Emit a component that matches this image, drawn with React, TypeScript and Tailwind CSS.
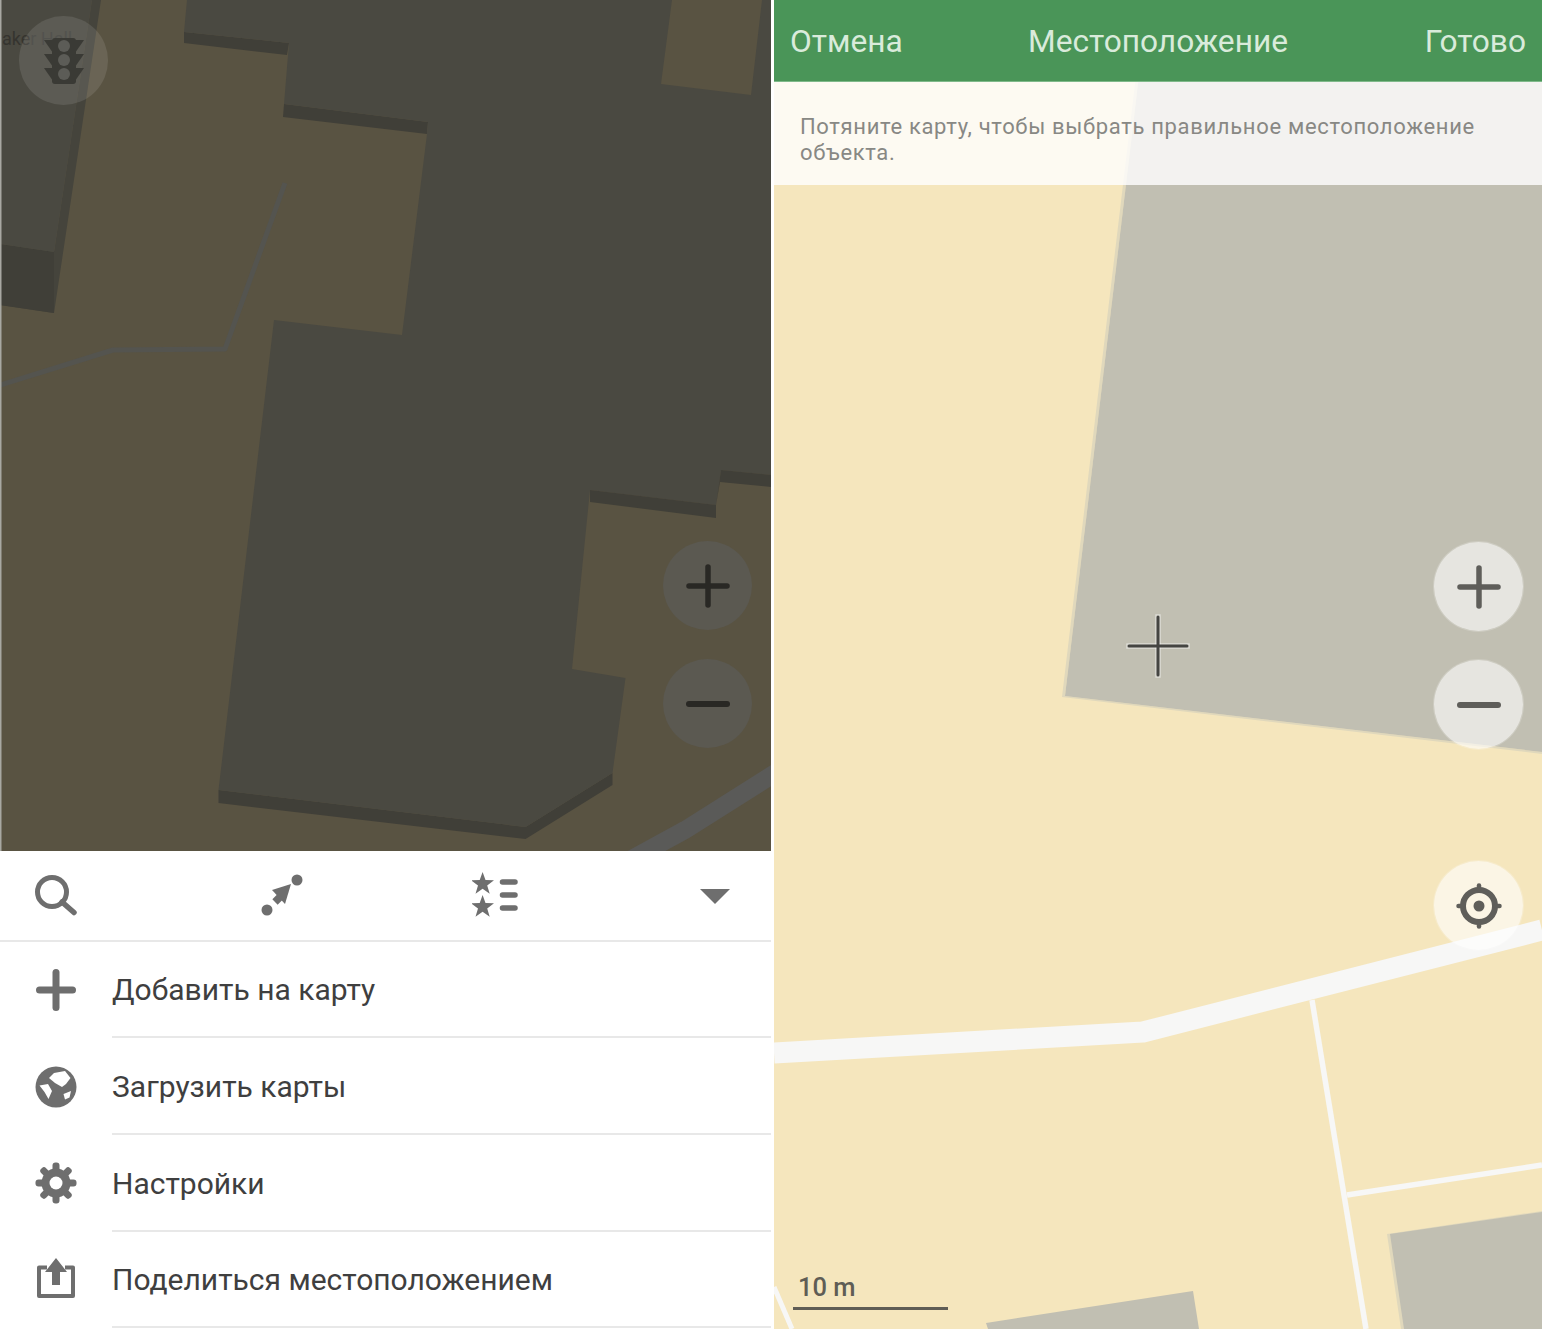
import React from "react";

const STAR = "0,-12 2.9,-3.9 11.4,-3.7 4.6,1.5 7.1,9.7 0,4.8 -7.1,9.7 -4.6,1.5 -11.4,-3.7 -2.9,-3.9";
const G = "#6e6e6e";

function Ico({ children }: { children: React.ReactNode }) {
  return (
    <svg width="48" height="48" viewBox="0 0 48 48" className="block shrink-0">
      {children}
    </svg>
  );
}

const SearchIcon = () => (
  <Ico>
    <circle cx="20" cy="20" r="14.5" fill="none" stroke={G} strokeWidth="5" />
    <line x1="30" y1="30" x2="42" y2="40.5" stroke={G} strokeWidth="5.5" strokeLinecap="round" />
  </Ico>
);
const RouteIcon = () => (
  <Ico>
    <circle cx="9" cy="38" r="5.5" fill={G} />
    <circle cx="39" cy="8" r="5.5" fill={G} />
    <polygon points="33,12 14,18 27,32" fill={G} />
    <line x1="23" y1="24" x2="17" y2="30" stroke={G} strokeWidth="7.5" />
  </Ico>
);
const ListIcon = () => (
  <Ico>
    <polygon points={STAR} fill={G} transform="translate(10.6 12)" />
    <polygon points={STAR} fill={G} transform="translate(10.6 35)" />
    <g stroke={G} strokeWidth="5.5" strokeLinecap="round">
      <line x1="30.5" y1="10" x2="43" y2="10" />
      <line x1="30.5" y1="23" x2="43" y2="23" />
      <line x1="30.5" y1="36" x2="43" y2="36" />
    </g>
  </Ico>
);
const TriangleIcon = () => (
  <Ico>
    <polygon points="9,17 39,17 24,32" fill={G} />
  </Ico>
);
const PlusIcon = () => (
  <Ico>
    <g stroke={G} strokeWidth="7" strokeLinecap="round">
      <line x1="7.5" y1="24" x2="40.5" y2="24" />
      <line x1="24" y1="6.5" x2="24" y2="41.5" />
    </g>
  </Ico>
);
const GlobeIcon = () => (
  <Ico>
    <circle cx="24" cy="24" r="20.5" fill={G} />
    <polygon points="17,15 22,10 33,8 38.5,15 34,21 30,24 23,20" fill="#fff" />
    <polygon points="7.5,22.5 16,21 20,28 16.5,36 12.5,29" fill="#fff" />
    <polygon points="31.5,31 39,28 37.5,34.5 33,36.5" fill="#fff" />
  </Ico>
);
const GearIcon = () => (
  <Ico>
    {[0, 45, 90, 135, 180, 225, 270, 315].map((a) => (
      <rect key={a} x="20.5" y="3.5" width="7" height="12" rx="3" fill={G} transform={`rotate(${a} 24 24)`} />
    ))}
    <circle cx="24" cy="24" r="14.5" fill={G} />
    <circle cx="24" cy="24" r="6.5" fill="#fff" />
  </Ico>
);
const ShareIcon = () => (
  <Ico>
    <path d="M15 11.5H7V40H41V11.5H33" fill="none" stroke={G} strokeWidth="4" strokeLinejoin="round" />
    <polygon points="24,2 35,16 28,16 28,29 20,29 20,16 13,16" fill={G} />
  </Ico>
);

function MapButton({ className, children }: { className: string; children: React.ReactNode }) {
  return (
    <div className={`absolute w-[89px] h-[89px] rounded-full flex items-center justify-center ${className}`}>
      {children}
    </div>
  );
}

const PlusGlyph = ({ c }: { c: string }) => (
  <svg width="44" height="44" viewBox="0 0 44 44">
    <g stroke={c} strokeWidth="5.5" strokeLinecap="round">
      <line x1="3" y1="22" x2="41" y2="22" />
      <line x1="22" y1="3" x2="22" y2="41" />
    </g>
  </svg>
);
const MinusGlyph = ({ c }: { c: string }) => (
  <svg width="44" height="44" viewBox="0 0 44 44">
    <line x1="3" y1="22" x2="41" y2="22" stroke={c} strokeWidth="6" strokeLinecap="round" />
  </svg>
);

function LeftMap() {
  return (
    <svg viewBox="0 0 771 851" className="absolute inset-0 w-full h-full">
      <rect width="771" height="851" fill="#595342" />
      {/* roads */}
      <polyline points="285,183 225,349 113,350 0,385" fill="none" stroke="#54544f" strokeWidth="5" strokeLinejoin="round" />
      <polyline points="780,770 685,830 630,860" fill="none" stroke="#5a5a58" strokeWidth="18" />
      {/* upper-left building */}
      <polygon points="92,0 101,0 54,313 0,305 0,244 54,252" fill="#45443c" />
      <polygon points="0,244 54,252 54,313 0,305" fill="#403f38" />
      <polygon points="0,0 92,0 54,252 0,244" fill="#4a4941" />
      {/* main building shadow */}
      <polygon points="184,32 289,43 287,55 184,43" fill="#403f38" />
      <polygon points="284,104 428,122 427,134 283,117" fill="#403f38" />
      <polygon points="218.5,790 525.6,827 612.5,773 612.5,785 525.6,839 218.5,803" fill="#403f38" />
      {/* main building */}
      <polygon
        points="187,0 184,32 289,43 284,104 428,122 427,134 402,335 274,320 218.5,790 525.6,827 612.5,773 625.5,678 572,669 590,490 716,505 721,470 771,475 771,0 762,0 751,95 661,84 672,0"
        fill="#4a4941"
      />
      <polygon points="590,490 716,505 716,518 590,502" fill="#403f38" />
      <polygon points="721,470 771,475 771,487 720,482 716,505" fill="#403f38" />
      <rect x="0" y="0" width="1.5" height="851" fill="#a8a8a2" />
    </svg>
  );
}

function RightMap() {
  return (
    <svg viewBox="774 0 768 1329" className="absolute inset-0 w-full h-full">
      <rect x="774" y="0" width="768" height="1329" fill="#f5e6bd" />
      {/* main building */}
      <polygon points="1145,0 1148,0 1065,696 1542,752 1542,754 1062,697" fill="#e0d8bc" />
      <polygon points="1148,0 1542,0 1542,752 1065,696" fill="#c1bfb2" />
      {/* roads */}
      <polyline points="774,1053 1143,1032 1542,930" fill="none" stroke="#f7f7f6" strokeWidth="21" strokeLinejoin="round" />
      <line x1="1312" y1="1000" x2="1366" y2="1329" stroke="#f7f7f6" strokeWidth="5.5" />
      <line x1="1347" y1="1195" x2="1542" y2="1165" stroke="#f7f7f6" strokeWidth="5.5" />
      <line x1="774" y1="1287" x2="792" y2="1329" stroke="#f7f7f6" strokeWidth="5" />
      {/* lower buildings */}
      <polygon points="1387,1234 1542,1211 1542,1329 1401,1329" fill="#e0d8bc" />
      <polygon points="1390,1234 1542,1212 1542,1329 1404,1329" fill="#c1bfb2" />
      <polygon points="986,1323 1193,1291 1199,1329 988,1329" fill="#c1bfb2" />
    </svg>
  );
}

const rows: [React.ReactNode, string][] = [
  [<PlusIcon />, "Добавить на карту"],
  [<GlobeIcon />, "Загрузить карты"],
  [<GearIcon />, "Настройки"],
  [<ShareIcon />, "Поделиться местоположением"],
];

export default function App() {
  return (
    <div
      className="w-[1542px] h-[1329px] flex gap-[3px] bg-white overflow-hidden"
      style={{ fontFamily: "Roboto, 'Noto Sans', sans-serif" }}
    >
      {/* left phone */}
      <div className="w-[771px] h-full flex flex-col">
        <div className="relative h-[851px] shrink-0 overflow-hidden">
          <LeftMap />
          <div className="absolute left-[2px] top-[25px] text-[18px] leading-[28px] text-[#35342f] whitespace-nowrap">
            ake<span className="text-[#3f3f3a]">r Hall</span>
          </div>
          <MapButton className="left-[19px] top-[16px] bg-white/10">
            <svg width="48" height="52" viewBox="0 0 48 52">
              <g fill="#3a3a35">
                <rect x="12" y="3" width="24" height="46" rx="3" />
                <polygon points="4,5 44,5 35,18 13,18" />
                <polygon points="4,19 44,19 35,32 13,32" />
                <polygon points="4,33 44,33 35,46 13,46" />
              </g>
              <g fill="#5c5c57">
                <circle cx="24" cy="11" r="6" />
                <circle cx="24" cy="25" r="6" />
                <circle cx="24" cy="39" r="6" />
              </g>
            </svg>
          </MapButton>
          <MapButton className="left-[663px] top-[541px] bg-[#5b5951]">
            <PlusGlyph c="#292824" />
          </MapButton>
          <MapButton className="left-[663px] top-[659px] bg-[#5b5951]">
            <MinusGlyph c="#292824" />
          </MapButton>
        </div>

        <div className="flex-1 bg-white">
          <div className="relative flex items-center h-[87.5px] pt-[1px] border-b-2 border-[#e8e8e8] box-content">
            <div className="w-[48px] ml-[32px]"><SearchIcon /></div>
            <div className="w-[48px] ml-[178px]"><RouteIcon /></div>
            <div className="w-[48px] ml-[166px]"><ListIcon /></div>
            <div className="w-[48px] ml-[171px]"><TriangleIcon /></div>
          </div>
          {rows.map(([icon, label]) => (
            <div key={label} className="flex items-center h-[96.7px]">
              <div className="w-[112px] flex justify-center shrink-0">{icon}</div>
              <div className="flex-1 h-full flex items-center pt-[2px] border-b-2 border-[#e8e8e8] text-[30px] text-[#3f3f3f]">
                {label}
              </div>
            </div>
          ))}
        </div>
      </div>

      {/* right phone */}
      <div className="relative flex-1 h-full overflow-hidden">
        <RightMap />
        <div className="relative grid grid-cols-[1fr_auto_1fr] items-center h-[82px] pt-[2px] bg-[#4a9558] border-b border-[#7fb98a] px-[16px] text-[31.7px] text-[#d9ebdb]">
          <div>Отмена</div>
          <div>Местоположение</div>
          <div className="text-right">Готово</div>
        </div>
        <div className="relative h-[103px] bg-white/80 pl-[26px] pr-[60px] pt-[32px] text-[22px] leading-[26px] tracking-[0.67px] text-[#888884]">
          Потяните карту, чтобы выбрать правильное местоположение объекта.
        </div>

        <svg width="64" height="64" viewBox="0 0 64 64" className="absolute left-[352px] top-[614px]">
          <g stroke="#ffffff" strokeOpacity="0.35" strokeWidth="6" strokeLinecap="round">
            <line x1="2" y1="32" x2="62" y2="32" />
            <line x1="32" y1="2" x2="32" y2="62" />
          </g>
          <g stroke="#454542" strokeWidth="3" strokeLinecap="round">
            <line x1="3" y1="32" x2="61" y2="32" />
            <line x1="32" y1="3" x2="32" y2="61" />
          </g>
        </svg>

        <MapButton className="left-[660px] top-[542px] bg-white/60 ring-1 ring-white/20">
          <PlusGlyph c="#5f5e5a" />
        </MapButton>
        <MapButton className="left-[660px] top-[660px] bg-white/60 ring-1 ring-white/20">
          <MinusGlyph c="#5f5e5a" />
        </MapButton>
        <MapButton className="left-[660px] top-[861px] bg-white/60 ring-1 ring-white/20">
          <svg width="48" height="48" viewBox="0 0 48 48">
            <circle cx="24" cy="24" r="16" fill="none" stroke="#5f5e5a" strokeWidth="6" />
            <circle cx="24" cy="24" r="5.5" fill="#5f5e5a" />
            <g stroke="#5f5e5a" strokeWidth="4.5" strokeLinecap="round">
              <line x1="24" y1="3.5" x2="24" y2="8" />
              <line x1="24" y1="40" x2="24" y2="44.5" />
              <line x1="3.5" y1="24" x2="8" y2="24" />
              <line x1="40" y1="24" x2="44.5" y2="24" />
            </g>
          </svg>
        </MapButton>

        <div className="absolute left-[19px] top-[1271px] w-[155px]">
          <div className="pl-[5px] text-[25.5px] leading-[32px] font-medium text-[#5f5d55]">10 m</div>
          <div className="mt-[4px] h-[3px] bg-[#5f5d55]" />
        </div>
      </div>
    </div>
  );
}
